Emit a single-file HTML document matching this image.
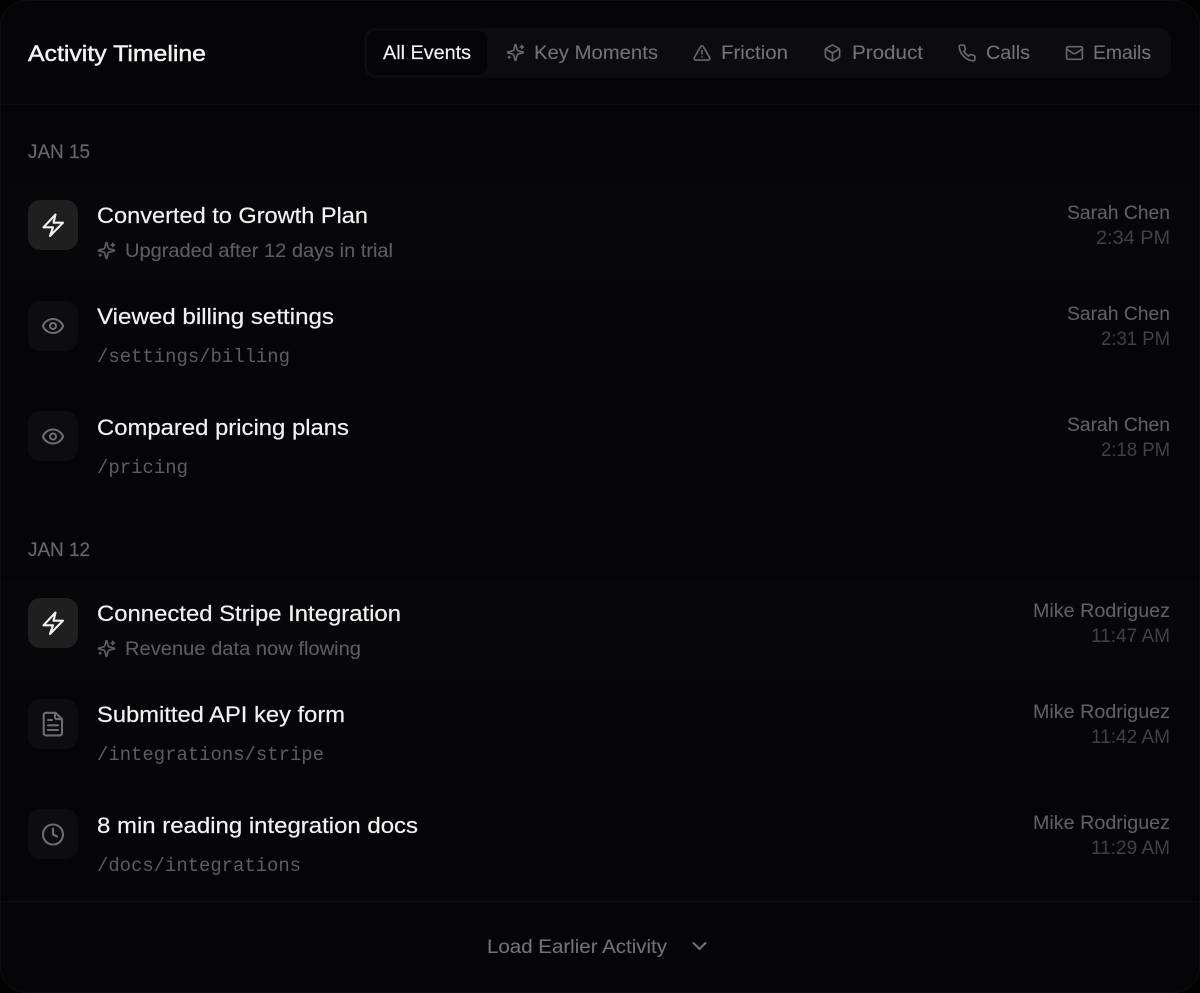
<!DOCTYPE html>
<html><head><meta charset="utf-8"><style>
html,body{margin:0;padding:0;background:#020203;width:1200px;height:993px;overflow:hidden}
svg{display:block}
text{font-family:"Liberation Sans",sans-serif;paint-order:stroke}
.t{font-size:22.6px;fill:#f2f2f3;stroke:#f2f2f3;stroke-width:.2px}
.hd{font-size:22.4px;fill:#f4f4f5;stroke:#f4f4f5;stroke-width:.45px}
.s{font-size:19.8px;fill:#5c5d60;stroke:#5c5d60;stroke-width:.12px}
.m{font-family:"Liberation Mono",monospace;font-size:19px;fill:#5c5d60}
.d{font-size:19.8px;fill:#66676a;stroke:#66676a;stroke-width:.2px}
.n{font-size:19.8px;fill:#5f6063;stroke:#5f6063;stroke-width:.1px}
.h{font-size:19.8px;fill:#404143}
.f{font-size:19.8px;fill:#717275;stroke:#717275;stroke-width:.12px}
.a{font-size:19.8px;fill:#f4f4f5;stroke:#f4f4f5;stroke-width:.15px}
.i{fill:none;stroke-linecap:round;stroke-linejoin:round}
</style></head><body>
<svg width="1200" height="993" viewBox="0 0 1200 993" xmlns="http://www.w3.org/2000/svg">
<defs>
<g id="spark"><path d="M9.94 15.5A2 2 0 0 0 8.5 14.06l-6.14-1.58a.5.5 0 0 1 0-.96L8.5 9.94A2 2 0 0 0 9.94 8.5l1.58-6.14a.5.5 0 0 1 .96 0L14.06 8.5a2 2 0 0 0 1.44 1.44l6.14 1.58a.5.5 0 0 1 0 .96l-6.14 1.58a2 2 0 0 0-1.44 1.44l-1.58 6.14a.5.5 0 0 1-.96 0z"/><path d="M20 3v4M22 5h-4M4 17v2M5 18H3"/></g>
<g id="eye"><path d="M2.06 12.35a1 1 0 0 1 0-.7 10.75 10.75 0 0 1 19.88 0 1 1 0 0 1 0 .7 10.75 10.75 0 0 1-19.88 0"/><circle cx="12" cy="12" r="3"/></g>
<g id="warn"><path d="m21.73 18-8-14a2 2 0 0 0-3.48 0l-8 14A2 2 0 0 0 4 21h16a2 2 0 0 0 1.73-3"/><path d="M12 9v4M12 17h.01"/></g>
<g id="box"><path d="M21 8a2 2 0 0 0-1-1.73l-7-4a2 2 0 0 0-2 0l-7 4A2 2 0 0 0 3 8v8a2 2 0 0 0 1 1.73l7 4a2 2 0 0 0 2 0l7-4A2 2 0 0 0 21 16z"/><path d="m3.3 7 8.7 5 8.7-5M12 22V12"/></g>
<g id="phone"><path d="M22 16.92v3a2 2 0 0 1-2.18 2 19.79 19.79 0 0 1-8.63-3.07 19.5 19.5 0 0 1-6-6 19.79 19.79 0 0 1-3.07-8.67A2 2 0 0 1 4.11 2h3a2 2 0 0 1 2 1.72c.13.96.36 1.9.7 2.81a2 2 0 0 1-.45 2.11L8.09 9.91a16 16 0 0 0 6 6l1.27-1.27a2 2 0 0 1 2.11-.45c.91.34 1.85.57 2.81.7A2 2 0 0 1 22 16.92z"/></g>
<g id="mail"><rect x="2" y="4" width="20" height="16" rx="2"/><path d="m22 7-8.97 5.7a1.94 1.94 0 0 1-2.06 0L2 7"/></g>
<g id="clock"><circle cx="12" cy="12" r="10"/><path d="M12 6v6l4 2"/></g>
<path id="bolt" d="M55.500 214.500 43.500 227.300h9.500L50 236l13-13.300h-9.500z"/>
<path id="file" d="M55.500 712.800H46a2.300 2.300 0 0 0-2.300 2.300v18.300a2 2 0 0 0 2 2h14.300a2 2 0 0 0 2-2V719.300zM55 713.300v4.200a1.600 1.600 0 0 0 1.600 1.600h5.200M48 720h4M48 725.300h10M48 730h10"/>
</defs>

<rect x="0.500" y="0.500" width="1199" height="992" rx="26" fill="#050507" stroke="#0e0e10"/>
<rect x="1" y="104" width="1198" height="1" fill="#0c0c0e"/>
<rect x="1" y="901" width="1198" height="1" fill="#0d0d0f"/>

<!-- Highlighted rows -->
<rect x="1" y="183" width="1198" height="98" fill="#070709"/>
<rect x="1" y="581" width="1198" height="98" fill="#070709"/>

<!-- Header -->
<text x="28" y="61" class="hd" textLength="178" lengthAdjust="spacingAndGlyphs">Activity Timeline</text>
<rect x="364" y="28" width="807" height="50" rx="12" fill="#0c0c0e"/>
<rect x="367" y="31" width="120" height="44" rx="9" fill="#050507"/>
<text x="383" y="59" class="a" textLength="88" lengthAdjust="spacingAndGlyphs">All Events</text>

<g class="i" stroke="#66676a" style="stroke-width:2.1">
<use href="#spark" transform="translate(506 43) scale(.79)"/>
<use href="#warn" transform="translate(692.500 43.500) scale(.79)"/>
<use href="#box" transform="translate(823 43.500) scale(.79)"/>
<use href="#phone" transform="translate(957.500 43.500) scale(.79)"/>
<use href="#mail" transform="translate(1065 43.500) scale(.79)"/>
</g>
<text x="534" y="59" class="f" textLength="124" lengthAdjust="spacingAndGlyphs">Key Moments</text>
<text x="721" y="59" class="f" textLength="67" lengthAdjust="spacingAndGlyphs">Friction</text>
<text x="852" y="59" class="f" textLength="71" lengthAdjust="spacingAndGlyphs">Product</text>
<text x="986" y="59" class="f" textLength="44" lengthAdjust="spacingAndGlyphs">Calls</text>
<text x="1093" y="59" class="f" textLength="58" lengthAdjust="spacingAndGlyphs">Emails</text>

<!-- Dates -->
<text x="28" y="158" class="d" textLength="62" lengthAdjust="spacingAndGlyphs">JAN 15</text>
<text x="28" y="556" class="d" textLength="62" lengthAdjust="spacingAndGlyphs">JAN 12</text>

<!-- Icon tiles -->
<rect x="28" y="200" width="50" height="50" rx="12" fill="#1f1f20"/>
<rect x="28" y="301" width="50" height="50" rx="12" fill="#0d0d0f"/>
<rect x="28" y="411" width="50" height="50" rx="12" fill="#0d0d0f"/>
<rect x="28" y="598" width="50" height="50" rx="12" fill="#1f1f20"/>
<rect x="28" y="699" width="50" height="50" rx="12" fill="#0d0d0f"/>
<rect x="28" y="809" width="50" height="50" rx="12" fill="#0d0d0f"/>

<g class="i" stroke="#f4f4f5" style="stroke-width:2.1">
<use href="#bolt"/>
<use href="#bolt" transform="translate(0 398)"/>
</g>
<g class="i" stroke="#6c6d70" style="stroke-width:2.1">
<use href="#eye" transform="translate(41 314)"/>
<use href="#eye" transform="translate(41 424.500)"/>
<use href="#file"/>
<use href="#clock" transform="translate(41 822.500)"/>
</g>
<g class="i" stroke="#5c5d60" style="stroke-width:2.2">
<use href="#spark" transform="translate(97 241) scale(.79)"/>
<use href="#spark" transform="translate(97 639) scale(.79)"/>
</g>

<!-- Titles -->
<text x="97" y="223" class="t" textLength="271" lengthAdjust="spacingAndGlyphs">Converted to Growth Plan</text>
<text x="97" y="324" class="t" textLength="237" lengthAdjust="spacingAndGlyphs">Viewed billing settings</text>
<text x="97" y="435" class="t" textLength="252" lengthAdjust="spacingAndGlyphs">Compared pricing plans</text>
<text x="97" y="621" class="t" textLength="304" lengthAdjust="spacingAndGlyphs">Connected Stripe Integration</text>
<text x="97" y="722" class="t" textLength="248" lengthAdjust="spacingAndGlyphs">Submitted API key form</text>
<text x="97" y="833" class="t" textLength="321" lengthAdjust="spacingAndGlyphs">8 min reading integration docs</text>

<!-- Subs -->
<text x="125" y="257" class="s" textLength="268" lengthAdjust="spacingAndGlyphs">Upgraded after 12 days in trial</text>
<text x="97" y="362" class="m" textLength="193" lengthAdjust="spacingAndGlyphs">/settings/billing</text>
<text x="97" y="473" class="m" textLength="91" lengthAdjust="spacingAndGlyphs">/pricing</text>
<text x="125" y="655" class="s" textLength="236" lengthAdjust="spacingAndGlyphs">Revenue data now flowing</text>
<text x="97" y="760" class="m" textLength="227" lengthAdjust="spacingAndGlyphs">/integrations/stripe</text>
<text x="97" y="871" class="m" textLength="204" lengthAdjust="spacingAndGlyphs">/docs/integrations</text>

<!-- Right column -->
<text x="1067" y="219" class="n" textLength="103" lengthAdjust="spacingAndGlyphs">Sarah Chen</text>
<text x="1096" y="244" class="h" textLength="74" lengthAdjust="spacingAndGlyphs">2:34 PM</text>
<text x="1067" y="320" class="n" textLength="103" lengthAdjust="spacingAndGlyphs">Sarah Chen</text>
<text x="1101" y="345" class="h" textLength="69" lengthAdjust="spacingAndGlyphs">2:31 PM</text>
<text x="1067" y="431" class="n" textLength="103" lengthAdjust="spacingAndGlyphs">Sarah Chen</text>
<text x="1101" y="456" class="h" textLength="69" lengthAdjust="spacingAndGlyphs">2:18 PM</text>
<text x="1033" y="617" class="n" textLength="137" lengthAdjust="spacingAndGlyphs">Mike Rodriguez</text>
<text x="1091" y="642" class="h" textLength="79" lengthAdjust="spacingAndGlyphs">11:47 AM</text>
<text x="1033" y="718" class="n" textLength="137" lengthAdjust="spacingAndGlyphs">Mike Rodriguez</text>
<text x="1091" y="743" class="h" textLength="79" lengthAdjust="spacingAndGlyphs">11:42 AM</text>
<text x="1033" y="829" class="n" textLength="137" lengthAdjust="spacingAndGlyphs">Mike Rodriguez</text>
<text x="1091" y="854" class="h" textLength="79" lengthAdjust="spacingAndGlyphs">11:29 AM</text>

<!-- Footer -->
<text x="487" y="953" class="f" textLength="180" lengthAdjust="spacingAndGlyphs">Load Earlier Activity</text>
<path d="M693.500 943l6 6 6-6" class="i" stroke="#717275" style="stroke-width:2"/>
</svg>
</body></html>
